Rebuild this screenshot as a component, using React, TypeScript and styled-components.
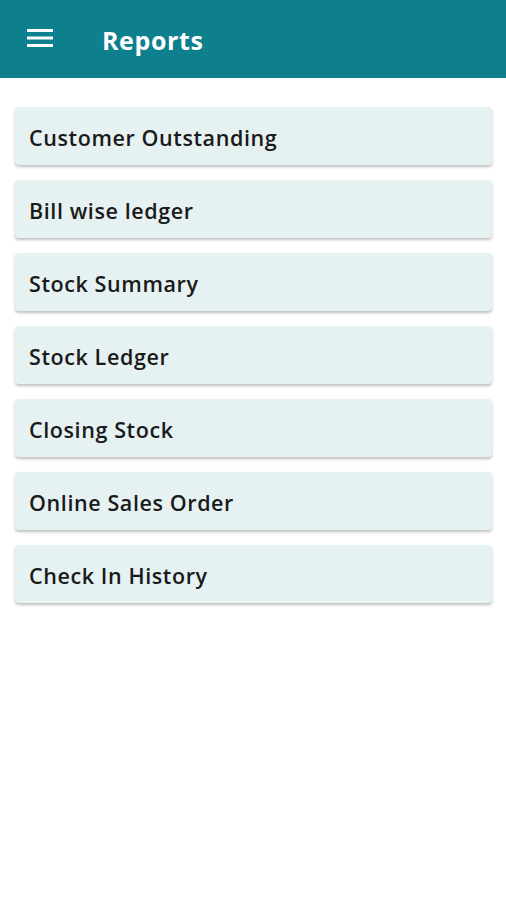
import styled, { createGlobalStyle } from "styled-components";

const reports = [
  "Customer Outstanding",
  "Bill wise ledger",
  "Stock Summary",
  "Stock Ledger",
  "Closing Stock",
  "Online Sales Order",
  "Check In History",
];

const App = () => {
  return (
    <Page>
      <GlobalStyle />
      <Header>
        <MenuButton aria-label="menu">
          <svg width="26" height="20" viewBox="0 0 26 20">
            <rect x="0" y="1" width="26" height="3" fill="#fff" />
            <rect x="0" y="8.5" width="26" height="3" fill="#fff" />
            <rect x="0" y="16" width="26" height="3" fill="#fff" />
          </svg>
        </MenuButton>
        <Title>Reports</Title>
      </Header>
      <List>
        {reports.map((name) => (
          <ReportCard key={name}>{name}</ReportCard>
        ))}
      </List>
    </Page>
  );
};

export default App;

const GlobalStyle = createGlobalStyle`
  html, body {
    margin: 0;
    padding: 0;
    background: #fff;
  }
`;

const Page = styled.div`
  width: 506px;
  min-height: 900px;
  background: #fff;
  font-family: "Open Sans", "Noto Sans", sans-serif;
`;

const Header = styled.header`
  height: 78px;
  background: #0e7f8c;
  display: flex;
  align-items: center;
  padding-left: 27px;
  box-sizing: border-box;
`;

const MenuButton = styled.div`
  width: 26px;
  height: 20px;
  display: flex;
  margin-top: -2px;
`;

const Title = styled.h1`
  margin: 2px 0 0 49px;
  color: #fff;
  font-size: 25px;
  font-weight: 700;
  letter-spacing: 0.6px;
`;

const List = styled.div`
  display: flex;
  flex-direction: column;
  gap: 15px;
  padding: 29px 14px 0 15px;
`;

const ReportCard = styled.div`
  height: 58px;
  display: flex;
  align-items: center;
  padding-left: 14px;
  background: #e6f1f2;
  border-radius: 4px;
  box-shadow: 0 2px 3px rgba(0, 0, 0, 0.25);
  color: #1a1a1a;
  font-size: 21.5px;
  font-weight: 600;
  letter-spacing: 0.6px;
  padding-top: 2px;
  box-sizing: border-box;
`;
